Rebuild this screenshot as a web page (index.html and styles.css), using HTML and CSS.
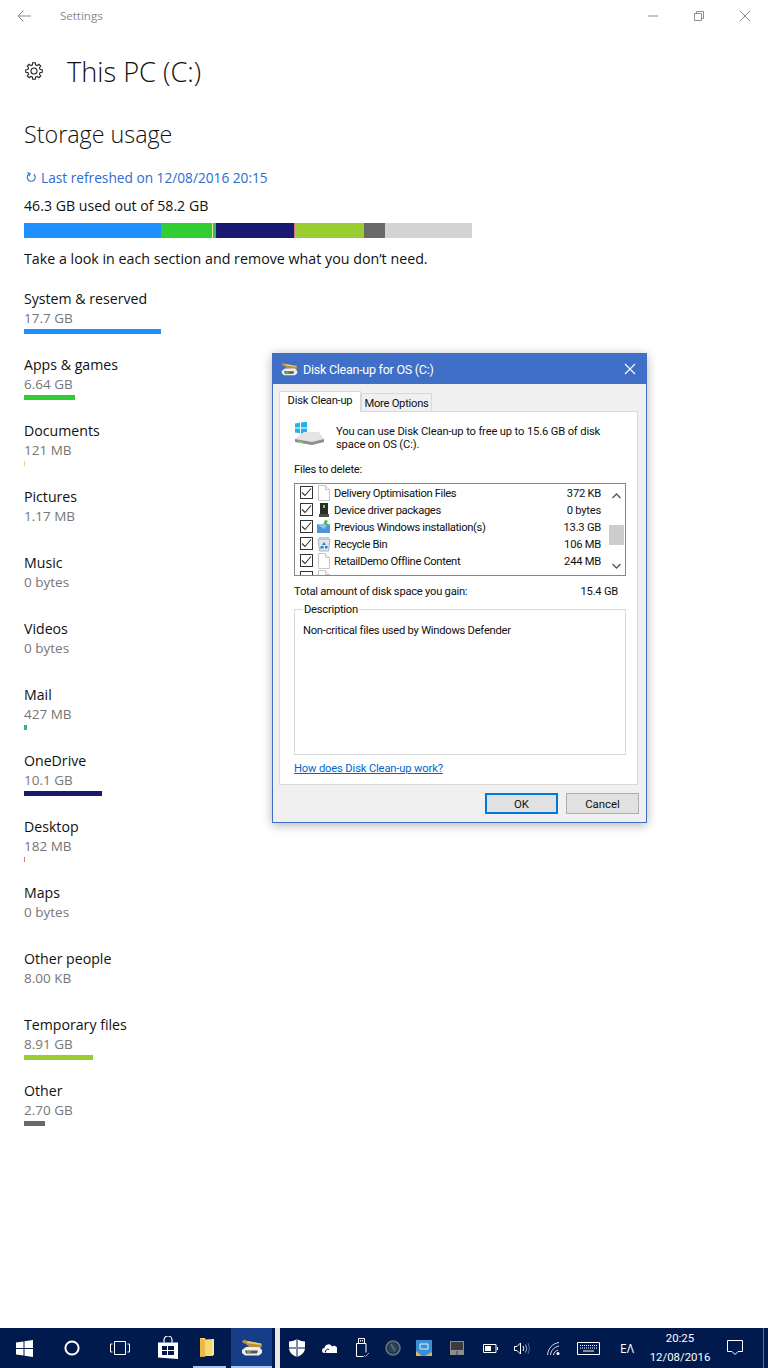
FILE: index.html
```html
<!DOCTYPE html>
<html lang="en-GB">
<head>
    <meta charset="UTF-8">
    <meta name="viewport" content="width=device-width, initial-scale=1.0">
    <title>Settings</title>
    <link rel="stylesheet" href="styles.css">
</head>
<body>
    <svg class="defs" width="0" height="0">
        <symbol id="cleanup" viewBox="0 0 22 17">
            <path d="M1 2l3-1.500 2 1.500 14 2.500 1 2.500-1 2-12-1L5 5 2 4z" fill="#b8923a"/>
            <path d="M6 2l14 2.500 .5 1.500L6 4z" fill="#e6cb7c"/>
            <path d="M1 11l4-3h13l3 3v3l-3 2.500H4L1 14z" fill="#eeeeee"/>
            <path d="M4 11.500h13l-1 3H5z" fill="#555"/>
            <path d="M6 12.500h4v1H6z" fill="#7fe05a"/>
        </symbol>
        <symbol id="file" viewBox="0 0 16 16">
            <path d="M2.500.5h7l4 4v11h-11z" fill="#fff" stroke="#c8c8c8"/>
            <path d="M9.500.5v4h4" fill="#f2f2f2" stroke="#c8c8c8"/>
        </symbol>
    </svg>

    <div class="settings">
        <header class="topbar">
            <svg class="back" width="14" height="12" viewBox="0 0 14 12"><path d="M6.500.5L1 6l5.500 5.500M1 6h13" fill="none" stroke="#8c8c8c"/></svg>
            <span class="app-name">Settings</span>
            <div class="win-controls">
                <svg width="46" height="32" viewBox="0 0 46 32"><path d="M18 16h10" stroke="#8c8c8c"/></svg>
                <svg width="46" height="32" viewBox="0 0 46 32"><path d="M18.500 13.500h7v7h-7zM20.500 13.500v-2h7v7h-2" fill="none" stroke="#8c8c8c"/></svg>
                <svg width="46" height="32" viewBox="0 0 46 32"><path d="M18 11l10 10M28 11L18 21" stroke="#8c8c8c"/></svg>
            </div>
        </header>

        <main class="content">
            <div class="page-title">
                <svg class="gear" width="20" height="20" viewBox="0 0 24 24">
                    <g transform="translate(12 12)" fill="none" stroke="#222" stroke-width="1.300">
                        <polygon points="1.56,-9.88 1.84,-7.37 3.91,-6.51 5.88,-8.09 8.09,-5.88 6.51,-3.91 7.37,-1.84 9.88,-1.56 9.88,1.56 7.37,1.84 6.51,3.91 8.09,5.88 5.88,8.09 3.91,6.51 1.84,7.37 1.56,9.88 -1.56,9.88 -1.84,7.37 -3.91,6.51 -5.88,8.09 -8.09,5.88 -6.51,3.91 -7.37,1.84 -9.88,1.56 -9.88,-1.56 -7.37,-1.84 -6.51,-3.91 -8.09,-5.88 -5.88,-8.09 -3.91,-6.51 -1.84,-7.37 -1.56,-9.88"/>
                        <circle r="3.600"/>
                    </g>
                </svg>
                <h1>This PC (C:)</h1>
            </div>
            <h2>Storage usage</h2>
            <div class="refreshed">
                <svg width="11" height="11" viewBox="0 0 11 11"><path d="M7.800 2.200A4 4 0 1 1 3 2" fill="none" stroke="#2f6bd0" stroke-width="1.100"/><path d="M1.500 .5L4.200 1.800 2.800 4.200" fill="none" stroke="#2f6bd0" stroke-width="1.100"/></svg>
                <span>Last refreshed on 12/08/2016 20:15</span>
            </div>
            <div class="used">46.3 GB used out of 58.2 GB</div>
            <div class="usage-bar">
                <i style="width:137px;background:#1e90ff"></i>
                <i style="width:51px;background:#32cd32"></i>
                <i style="width:1px;background:#f0e68c"></i>
                <i style="width:3px;background:#3cb371"></i>
                <i style="width:78px;background:#191970"></i>
                <i style="width:1px;background:#db7093"></i>
                <i style="width:69px;background:#9acd32"></i>
                <i style="width:21px;background:#696969"></i>
                <i style="width:87px;background:#d3d3d3"></i>
            </div>
            <p class="hint">Take a look in each section and remove what you don’t need.</p>

            <ul class="cats">
                <li><span class="cat-name">System &amp; reserved</span><span class="cat-size">17.7 GB</span><i class="cat-bar" style="width:137px;background:#1e90ff"></i></li>
                <li><span class="cat-name">Apps &amp; games</span><span class="cat-size">6.64 GB</span><i class="cat-bar" style="width:51px;background:#32cd32"></i></li>
                <li><span class="cat-name">Documents</span><span class="cat-size">121 MB</span><i class="cat-bar" style="width:1px;background:#e8dc70"></i></li>
                <li><span class="cat-name">Pictures</span><span class="cat-size">1.17 MB</span></li>
                <li><span class="cat-name">Music</span><span class="cat-size">0 bytes</span></li>
                <li><span class="cat-name">Videos</span><span class="cat-size">0 bytes</span></li>
                <li><span class="cat-name">Mail</span><span class="cat-size">427 MB</span><i class="cat-bar" style="width:3px;background:#3cb371"></i></li>
                <li><span class="cat-name">OneDrive</span><span class="cat-size">10.1 GB</span><i class="cat-bar" style="width:78px;background:#191970"></i></li>
                <li><span class="cat-name">Desktop</span><span class="cat-size">182 MB</span><i class="cat-bar" style="width:1px;background:#db7093"></i></li>
                <li><span class="cat-name">Maps</span><span class="cat-size">0 bytes</span></li>
                <li><span class="cat-name">Other people</span><span class="cat-size">8.00 KB</span></li>
                <li><span class="cat-name">Temporary files</span><span class="cat-size">8.91 GB</span><i class="cat-bar" style="width:69px;background:#9acd32"></i></li>
                <li><span class="cat-name">Other</span><span class="cat-size">2.70 GB</span><i class="cat-bar" style="width:21px;background:#696969"></i></li>
            </ul>
        </main>
    </div>

    <!-- floating dialog window -->
    <section class="dialog">
        <div class="dlg-title">
            <svg width="17" height="14"><use href="#cleanup"/></svg>
            <span>Disk Clean-up for OS (C:)</span>
            <svg class="dlg-close" width="12" height="12" viewBox="0 0 12 12"><path d="M1 1l10 10M11 1L1 11" stroke="#fff" stroke-width="1.100"/></svg>
        </div>
        <div class="dlg-body">
            <div class="tabs">
                <span class="tab active">Disk Clean-up</span>
                <span class="tab">More Options</span>
            </div>
            <div class="panel">
                <div class="intro">
                    <svg width="32" height="28" viewBox="0 0 32 28">
                        <path d="M1 2.500l5-.7v4.700H1zM7 1.600l6-.9v5.800H7zM1 7.500h5v4.700l-5-.7zM7 7.500h6v5.800l-6-.9z" fill="#1fb4ee"/>
                        <path d="M1 18l9-7h15l5 7v3l-12 3L1 21z" fill="#e4e4e4"/>
                        <path d="M1 18l17 3 12-3v3l-12 3-17-3z" fill="#8f8f8f"/>
                        <path d="M4 20l5 1v1l-5-1z" fill="#7be04f"/>
                    </svg>
                    <p>You can use Disk Clean-up to free up to 15.6 GB of disk space on OS (C:).</p>
                </div>
                <div class="files-label">Files to delete:</div>
                <div class="file-list">
                    <div class="rows">
                        <div class="file-row">
                            <span class="check"><svg width="11" height="11" viewBox="0 0 11 11"><path d="M1 5.500l3 3L10 1.500" fill="none" stroke="#333" stroke-width="1.100"/></svg></span>
                            <svg class="ficon" width="16" height="16"><use href="#file"/></svg>
                            <span class="fname">Delivery Optimisation Files</span><span class="fsize">372 KB</span>
                        </div>
                        <div class="file-row">
                            <span class="check"><svg width="11" height="11" viewBox="0 0 11 11"><path d="M1 5.500l3 3L10 1.500" fill="none" stroke="#333" stroke-width="1.100"/></svg></span>
                            <svg class="ficon" width="16" height="16" viewBox="0 0 16 16"><path d="M4 1h8v11H4z" fill="#2b2b2b"/><path d="M7 3h2v3H7z" fill="#5fe04a"/><path d="M3 12h10v3H3z" fill="#4a4a4a"/></svg>
                            <span class="fname">Device driver packages</span><span class="fsize">0 bytes</span>
                        </div>
                        <div class="file-row">
                            <span class="check"><svg width="11" height="11" viewBox="0 0 11 11"><path d="M1 5.500l3 3L10 1.500" fill="none" stroke="#333" stroke-width="1.100"/></svg></span>
                            <svg class="ficon" width="16" height="16" viewBox="0 0 16 16"><path d="M1 5h13v9H1z" fill="#4f93d8"/><path d="M1 5l6.500 5L14 5z" fill="#8fc0ec"/><path d="M9 1l3.500 1-2 1.500 2.500 3-2 1-2.500-3L7 6z" fill="#3fbf3f"/></svg>
                            <span class="fname">Previous Windows installation(s)</span><span class="fsize">13.3 GB</span>
                        </div>
                        <div class="file-row">
                            <span class="check"><svg width="11" height="11" viewBox="0 0 11 11"><path d="M1 5.500l3 3L10 1.500" fill="none" stroke="#333" stroke-width="1.100"/></svg></span>
                            <svg class="ficon" width="16" height="16" viewBox="0 0 16 16"><path d="M2 3h12l-1.500 12h-9z" fill="#dfe6ec" stroke="#a9b3bb"/><path d="M3 1h10v2H3z" fill="#c4ccd2"/><path d="M8 6l2 3H6zM5 10h2.500v2.500H4zM9 10h3l-1 2.500H9z" fill="#2f7fc8"/></svg>
                            <span class="fname">Recycle Bin</span><span class="fsize">106 MB</span>
                        </div>
                        <div class="file-row">
                            <span class="check"><svg width="11" height="11" viewBox="0 0 11 11"><path d="M1 5.500l3 3L10 1.500" fill="none" stroke="#333" stroke-width="1.100"/></svg></span>
                            <svg class="ficon" width="16" height="16"><use href="#file"/></svg>
                            <span class="fname">RetailDemo Offline Content</span><span class="fsize">244 MB</span>
                        </div>
                        <div class="file-row">
                            <span class="check"></span>
                            <svg class="ficon" width="16" height="16"><use href="#file"/></svg>
                        </div>
                    </div>
                    <div class="scroll">
                        <svg width="9" height="6" viewBox="0 0 9 6"><path d="M.5 5L4.500 1l4 4" fill="none" stroke="#555" stroke-width="1.300"/></svg>
                        <i class="thumb"></i>
                        <svg width="9" height="6" viewBox="0 0 9 6"><path d="M.5 1l4 4 4-4" fill="none" stroke="#555" stroke-width="1.300"/></svg>
                    </div>
                </div>
                <div class="total"><span>Total amount of disk space you gain:</span><span>15.4 GB</span></div>
                <fieldset class="desc">
                    <legend>Description</legend>
                    <p>Non-critical files used by Windows Defender</p>
                </fieldset>
                <a class="help" href="#">How does Disk Clean-up work?</a>
            </div>
            <div class="buttons">
                <button class="btn primary">OK</button>
                <button class="btn">Cancel</button>
            </div>
        </div>
    </section>

    <footer class="taskbar">
        <div class="tb-cell"><svg width="17" height="17" viewBox="0 0 17 17"><path d="M0 2.500L7.500 1.400v6.500H0zM8.500 1.300L17 0v7.900H8.500zM0 9h7.500v6.600L0 14.500zM8.500 9H17v8l-8.500-1.300z" fill="#fff"/></svg></div>
        <div class="tb-cell"><svg width="16" height="16" viewBox="0 0 16 16"><circle cx="8" cy="8" r="6.600" fill="none" stroke="#fff" stroke-width="2"/></svg></div>
        <div class="tb-cell"><svg width="20" height="14" viewBox="0 0 20 14"><path d="M4.500.5h11v13h-11zM2.500 3H.5v8h2M17.500 3h2v8h-2" fill="none" stroke="#fff"/></svg></div>
        <div class="tb-cell"><svg width="22" height="24" viewBox="0 0 22 24"><path d="M1 6.500h20V23L1 21.500z" fill="#fff"/><path d="M7 6.500V4a4 4 0 0 1 8 0v2.500" fill="none" stroke="#fff" stroke-width="1.200"/><path d="M5 10h5v4H5zM11 10h6v4h-6zM5 15h5v4H5zM11 15h6v4h-6z" fill="#00194a"/></svg></div>
        <div class="tb-cell tb-open tb-explorer"><svg width="14" height="21" viewBox="0 0 14 21"><path d="M0 1l5 0 .5 1.500L13 2v17H5L0 20z" fill="#f7d674"/><path d="M0 1l5 2v17l-5-1z" fill="#e9b949"/><path d="M12 2h2v16h-2z" fill="#fbe69e"/></svg></div>
        <div class="tb-cell tb-open tb-active"><svg width="22" height="17"><use href="#cleanup"/></svg></div>
        <div class="tb-gap"></div>
        <div class="tray">
            <div class="tb-cell"><svg width="16" height="18" viewBox="0 0 16 18"><path d="M8 0c2 1.500 5 2.500 8 2.500V9c0 4-3.500 7.500-8 9-4.500-1.500-8-5-8-9V2.500C3 2.500 6 1.500 8 0z" fill="#fff"/><path d="M7.500 0v18h1V0zM0 8.500h16v1H0z" fill="#00194a"/></svg></div>
            <div class="tb-cell"><svg width="15" height="10" viewBox="0 0 15 10"><path d="M2.500 10a2.500 2.500 0 0 1 0-5A4 4 0 0 1 10 3.500 3.300 3.300 0 0 1 15 7.500V10z" fill="#fff"/><path d="M3.500 9.500A2.500 2.500 0 0 1 7 6.500" fill="none" stroke="#00194a"/></svg></div>
            <div class="tb-cell"><svg width="15" height="20" viewBox="0 0 15 20"><path d="M3.500.5h6v5h-6zM1.500 5.500h9.500v9M1.500 5.500v13h7" fill="none" stroke="#fff"/><path d="M5 2h1v1.500H5zM7 2h1v1.500H7z" fill="#fff"/><path d="M9 17l1.500 1.500L14 15" fill="none" stroke="#9aa5bd"/></svg></div>
            <div class="tb-cell"><svg width="16" height="16" viewBox="0 0 16 16"><circle cx="8" cy="8" r="6.800" fill="none" stroke="#5d6f74" stroke-width="2"/><circle cx="8" cy="8" r="5" fill="#2c4258"/><path d="M6 4l4 7" stroke="#5d6f74" stroke-width="1.600"/></svg></div>
            <div class="tb-cell"><svg width="16" height="16" viewBox="0 0 16 16"><path d="M0 0h16v16H0z" fill="#3a8fd6"/><path d="M0 11l6 5H0zM16 16h-7l7-4z" fill="#e9b24a"/><path d="M4 4h8v5H4z" fill="none" stroke="#dff2ff"/></svg></div>
            <div class="tb-cell"><svg width="14" height="14" viewBox="0 0 14 14"><path d="M0 0h14v14H0z" fill="#8d8d8d"/><path d="M1 1h12v8H1z" fill="#3c3c3c"/><path d="M6.500 10h1v4h-1z" fill="#3c3c3c"/></svg></div>
            <div class="tb-cell"><svg width="15" height="9" viewBox="0 0 15 9"><path d="M.5.5h12.500v8H.5z" fill="none" stroke="#fff"/><path d="M2 2h6v5H2z" fill="#fff"/><path d="M14 3h1v3h-1z" fill="#fff"/></svg></div>
            <div class="tb-cell"><svg width="16" height="13" viewBox="0 0 16 13"><path d="M.5 4.500h2.500L6.500 1v11L3 8.500H.5z" fill="none" stroke="#fff"/><path d="M9 4q1.500 2.500 0 5" fill="none" stroke="#fff"/><path d="M11.500 2.500q2.500 4 0 8" fill="none" stroke="#a8b2c8"/><path d="M14 1q3 5.500 0 11" fill="none" stroke="#5b6c8e"/></svg></div>
            <div class="tb-cell"><svg width="13" height="13" viewBox="0 0 13 13"><path d="M.5 13C1 6.500 5.500 1.500 12 .5M3.500 13C4 8.500 7 5 12 4M6.500 13C7 10.500 9 8.500 11 8" fill="none" stroke="#fff" opacity=".85"/><circle cx="11" cy="11.500" r="1.500" fill="#fff"/></svg></div>
            <div class="tb-cell"><svg width="23" height="13" viewBox="0 0 23 13"><path d="M.5.5h22v12H.5z" fill="none" stroke="#fff"/><path d="M3 3.500h17M3 6h17" stroke="#fff" stroke-dasharray="1 1"/><path d="M6 9h11" stroke="#fff"/></svg></div>
            <div class="tb-cell tb-lang">EΛ</div>
            <div class="tb-cell tb-clock"><span>20:25</span><span>12/08/2016</span></div>
            <div class="tb-cell"><svg width="16" height="16" viewBox="0 0 16 16"><path d="M.5.5h15v11h-4.500L8 14.500 5 11.500H.500z" fill="none" stroke="#fff"/></svg></div>
            <div class="tb-show"></div>
        </div>
    </footer>
</body>
</html>
```

FILE: styles.css
```css
* {
    box-sizing: border-box;
}
html, body {
    height: 100%;
}
body {
    margin: 0;
    font-family: "Open Sans", "Noto Sans", Arial, sans-serif;
    background-color: white;
    color: #111;
    display: flex;
    flex-direction: column;
    position: relative;
    overflow: hidden;
}
.defs {
    position: absolute;
}
.settings {
    flex: 1;
}
.topbar {
    height: 32px;
    display: flex;
    align-items: center;
    padding-left: 17px;
}
.app-name {
    margin: 0 0 2px 29px;
    font-size: 11.500px;
    color: #8a8a8a;
}
.win-controls {
    margin-left: auto;
    display: flex;
}
.win-controls svg {
    display: block;
}
.content {
    padding-left: 24px;
}
.page-title {
    margin-top: 19px;
    height: 40px;
    display: flex;
    align-items: center;
}
.gear {
    margin-right: 23px;
}
h1 {
    margin: 0;
    font-size: 27.200px;
    font-weight: 300;
    color: #111;
}
h2 {
    margin: 27px 0 0;
    font-size: 23.300px;
    line-height: 32px;
    font-weight: 300;
}
.refreshed {
    margin-top: 17px;
    height: 20px;
    display: flex;
    align-items: center;
    gap: 4px;
    font-size: 13.700px;
    color: #2f6bd0;
}
.refreshed svg {
    margin-left: 2px;
}
.used {
    margin-top: 9px;
    font-size: 14.150px;
    line-height: 20px;
}
.usage-bar {
    margin-top: 7px;
    display: flex;
    width: 448px;
    height: 15px;
}
.usage-bar i {
    display: block;
}
.hint {
    margin: 11px 0 0;
    font-size: 14.250px;
    line-height: 20px;
}
.cats {
    list-style: none;
    margin: 20px 0 0;
    padding: 0;
}
.cats li {
    height: 66px;
}
.cat-name, .cat-size {
    display: block;
    font-size: 14.150px;
    line-height: 20px;
}
.cat-size {
    font-size: 13.500px;
    margin: -1px 0 1px;
    color: #767676;
}
.cat-bar {
    display: block;
    height: 5px;
}

/* dialog */
.dialog {
    position: absolute;
    left: 272px;
    top: 353px;
    width: 375px;
    height: 470px;
    border: 1px solid #3f6fc6;
    background-color: #f0f0f0;
    box-shadow: 0 2px 10px rgba(0, 0, 0, 0.3);
    font-family: Roboto, Arial, sans-serif;
    font-size: 11.200px;
    letter-spacing: -0.25px;
    color: #111;
    display: flex;
    flex-direction: column;
}
.dlg-title {
    height: 30px;
    background-color: #3f6fc6;
    color: white;
    font-size: 12.500px;
    display: flex;
    align-items: center;
    gap: 5px;
    padding: 0 10px 0 8px;
}
.dlg-close {
    margin-left: auto;
}
.dlg-body {
    flex: 1;
    padding: 7px 7px 8px 6px;
    display: flex;
    flex-direction: column;
}
.tabs {
    display: flex;
    align-items: flex-end;
    height: 20px;
    position: relative;
    z-index: 1;
}
.tab {
    height: 18px;
    width: 71px;
    text-align: center;
    line-height: 19px;
    background-color: #f0f0f0;
    border: 1px solid #d9d9d9;
    border-bottom: none;
}
.tab.active {
    height: 21px;
    width: 82px;
    margin: 0 0 -1px;
    line-height: 17px;
    background-color: white;
}
.panel {
    height: 374px;
    margin-right: 1px;
    background-color: white;
    border: 1px solid #d9d9d9;
    padding: 0 11px 0 14px;
    display: flex;
    flex-direction: column;
}
.intro {
    display: flex;
    height: 36px;
    margin-top: 9px;
    gap: 10px;
    letter-spacing: -0.15px;
}
.intro p {
    margin: 0;
    width: 280px;
    line-height: 13px;
    padding-top: 4px;
}
.files-label {
    margin-top: 5px;
    line-height: 15px;
}
.file-list {
    margin-top: 6px;
    height: 93px;
    border: 1px solid #828790;
    display: flex;
    overflow: hidden;
}
.rows {
    flex: 1;
    padding-left: 5px;
}
.file-row {
    height: 17px;
    display: flex;
    align-items: center;
    margin-top: 0;
}
.check {
    width: 13px;
    height: 13px;
    border: 1px solid #333;
    background-color: white;
    display: flex;
    align-items: center;
    justify-content: center;
    flex: none;
}
.ficon {
    margin: 0 2px 0 3px;
    flex: none;
}
.fname {
    flex: 1;
    padding-top: 2px;
    letter-spacing: -0.35px;
}
.fsize {
    width: 60px;
    padding-top: 2px;
    text-align: right;
    margin-right: 6px;
}
.scroll {
    width: 18px;
    padding: 9px 4px 6px 4px;
    display: flex;
    flex-direction: column;
    align-items: center;
}
.thumb {
    display: block;
    width: 15px;
    height: 20px;
    margin: 26px 0 auto;
    background-color: #cdcdcd;
    flex: none;
}
.total {
    margin-top: 8px;
    line-height: 15px;
    display: flex;
    justify-content: space-between;
    padding-right: 8px;
}
.desc {
    margin: 3px 0 0;
    padding: 0 8px;
    height: 153px;
    border: 1px solid #d9d9d9;
    min-width: 0;
}
.desc legend {
    padding: 1px 1px 0;
    line-height: 14px;
}
.desc p {
    margin: 6px 0 0;
    line-height: 15px;
}
.help {
    margin-top: 6px;
    line-height: 15px;
    letter-spacing: -0.15px;
    color: #0066cc;
}
.buttons {
    margin-top: 8px;
    display: flex;
    justify-content: flex-end;
    gap: 8px;
}
.btn {
    width: 73px;
    height: 21px;
    padding: 0;
    font-family: inherit;
    font-size: 11.400px;
    color: #111;
    background-color: #e1e1e1;
    border: 1px solid #adadad;
}
.btn.primary {
    border: 2px solid #0078d7;
}

/* taskbar */
.taskbar {
    height: 40px;
    flex: none;
    background-color: #001a4d;
    display: grid;
    grid-template-columns: 48px 48px 48px 48px 39px 41px 9px 1fr;
    color: white;
}
.tb-cell {
    display: flex;
    align-items: center;
    justify-content: center;
}
.tb-open {
    border-bottom: 2px solid #a9c4f0;
}
.tb-explorer {
    margin: 0 5px 0 1px;
    padding-right: 5px;
}
.tb-active {
    background-color: #163d87;
}
.tb-gap {
    background: linear-gradient(to right, #001a4d 0 3px, #e8e8e8 3px 8px, #001a4d 8px);
}
.tray {
    display: grid;
    grid-template-columns: 32px 33px 32px 30px 32px 34px 32px 31px 33px 36px 42px 64px 46px 10px;
}
.tb-lang {
    font-size: 12px;
}
.tb-clock {
    flex-direction: column;
    font-family: Roboto, Arial, sans-serif;
    font-size: 11.400px;
    line-height: 19px;
}
.tb-show {
    border-left: 1px solid #5d6f94;
    margin-left: 5px;
}
```
